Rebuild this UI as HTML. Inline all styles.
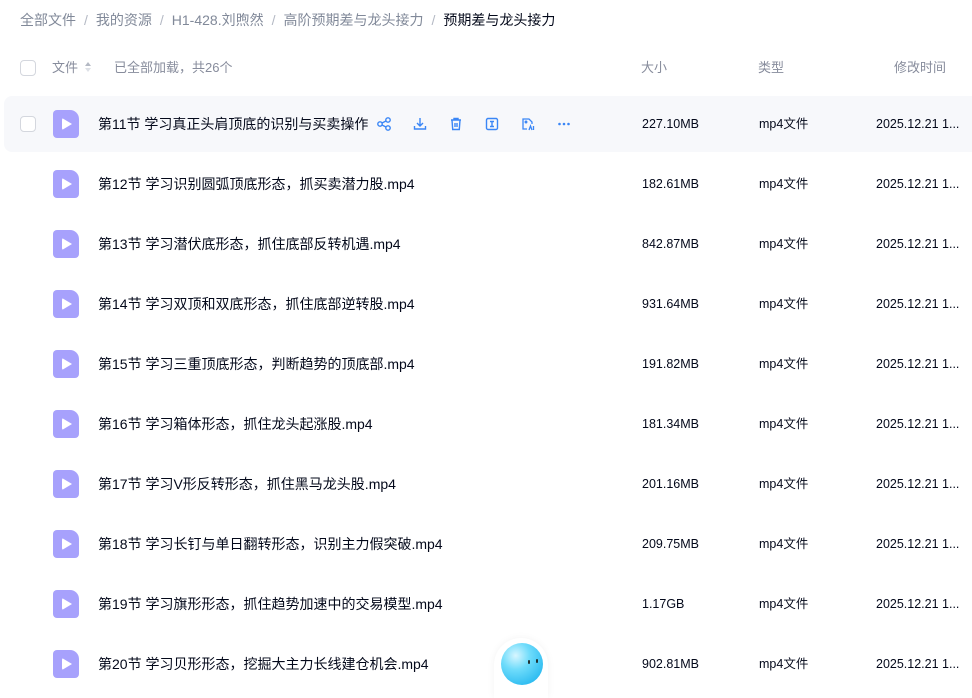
<!DOCTYPE html>
<html><head><meta charset="utf-8"><style>
*{margin:0;padding:0;box-sizing:border-box}
body{width:972px;height:688px;overflow:hidden;background:#fff;font-family:"Liberation Sans","Noto Sans CJK SC",sans-serif;position:relative;color:#03081a}
.a{position:absolute;white-space:nowrap}
.bc{top:10px;left:20px;font-size:14px;color:#818999;line-height:20px}
.bc span.s{margin:0 8px;color:#b4b9c4}
.bc b{font-weight:normal;color:#03081a}
.hd{font-size:13px;color:#878c9c;top:60px;line-height:16px}
.cb{width:16px;height:16px;border:1px solid #d4d7de;border-radius:4px;background:#fff}
.row{position:absolute;left:0;width:972px;height:56px}
.row.h{left:4px;width:968px;background:#f7f8fb;border-radius:8px 0 0 8px}
.ic{position:absolute;left:53px;top:14px;width:26px;height:28px;background:#a7a1fc;border-radius:4px 9px 4px 4px}
.ic:after{content:"";position:absolute;left:9px;top:8px;border-left:10px solid #fff;border-top:6px solid transparent;border-bottom:6px solid transparent;border-radius:2px}
.nm{position:absolute;left:98px;top:19px;font-size:14px;line-height:18px;color:#03081a}
.sz{position:absolute;left:642px;top:21px;font-size:12.5px;line-height:15px}
.tp{position:absolute;left:759px;top:21px;font-size:12.5px;line-height:15px}
.dt{position:absolute;left:876px;top:21px;font-size:12.5px;line-height:15px}
.ops svg{position:absolute;top:20px}
</style></head><body>
<div class="a bc">全部文件<span class="s">/</span>我的资源<span class="s">/</span>H1-428.刘煦然<span class="s">/</span>高阶预期差与龙头接力<span class="s">/</span><b>预期差与龙头接力</b></div>
<div class="a cb" style="left:20px;top:60px"></div>
<div class="a hd" style="left:52px">文件</div>
<div class="a" style="left:85px;top:62px;width:6px;height:12px"><div style="border-left:3px solid transparent;border-right:3px solid transparent;border-bottom:4px solid #b4b9c4"></div><div style="margin-top:2px;border-left:3px solid transparent;border-right:3px solid transparent;border-top:4px solid #dde0e6"></div></div>
<div class="a hd" style="left:114px">已全部加载，共26个</div>
<div class="a hd" style="left:641px">大小</div>
<div class="a hd" style="left:758px">类型</div>
<div class="a hd" style="left:894px">修改时间</div>

<div class="row h" style="top:96px">
<div class="a cb" style="left:16px;top:20px"></div>
<div class="ic" style="left:49px"></div>
<div class="nm" style="left:94px">第11节 学习真正头肩顶底的识别与买卖操作</div>
<div class="ops">
<svg style="left:372px" width="16" height="16" viewBox="0 0 16 16" fill="none" stroke="#3a86f6" stroke-width="1.4"><circle cx="4" cy="8" r="2.2"/><circle cx="12" cy="4" r="2.2"/><circle cx="12" cy="12" r="2.2"/><path d="M6 7l4-2M6 9l4 2"/></svg>
<svg style="left:408px" width="16" height="16" viewBox="0 0 16 16" fill="none" stroke="#3a86f6" stroke-width="1.4"><path d="M8 2v8M5 7l3 3 3-3M2.5 10v3h11v-3"/></svg>
<svg style="left:444px" width="16" height="16" viewBox="0 0 16 16" fill="none" stroke="#3a86f6" stroke-width="1.4"><path d="M3 4h10M6 4V2.5h4V4M4 4l.7 9.5h6.6L12 4M7 7v4M9 7v4"/></svg>
<svg style="left:480px" width="16" height="16" viewBox="0 0 16 16" fill="none" stroke="#3a86f6" stroke-width="1.4"><rect x="2.5" y="2.5" width="11" height="11" rx="1.5"/><path d="M6 5.5h4M8 5.5v5M6 10.5h4"/></svg>
<svg style="left:516px" width="16" height="16" viewBox="0 0 16 16" fill="none" stroke="#3a86f6" stroke-width="1.3"><path d="M7 13H3V3h6l3 3v2"/><circle cx="6" cy="6" r="0.8"/><path d="M9 14l1.5-4 1.5 4M13.5 10v4"/></svg>
<svg style="left:552px" width="16" height="16" viewBox="0 0 16 16" fill="#3a86f6"><circle cx="3.5" cy="8" r="1.3"/><circle cx="8" cy="8" r="1.3"/><circle cx="12.5" cy="8" r="1.3"/></svg>
</div>
<div class="sz" style="left:638px">227.10MB</div><div class="tp" style="left:755px">mp4文件</div><div class="dt" style="left:872px">2025.12.21 1...</div>
</div>

<div class="row" style="top:156px"><div class="ic"></div><div class="nm">第12节 学习识别圆弧顶底形态，抓买卖潜力股.mp4</div><div class="sz">182.61MB</div><div class="tp">mp4文件</div><div class="dt">2025.12.21 1...</div></div>
<div class="row" style="top:216px"><div class="ic"></div><div class="nm">第13节 学习潜伏底形态，抓住底部反转机遇.mp4</div><div class="sz">842.87MB</div><div class="tp">mp4文件</div><div class="dt">2025.12.21 1...</div></div>
<div class="row" style="top:276px"><div class="ic"></div><div class="nm">第14节 学习双顶和双底形态，抓住底部逆转股.mp4</div><div class="sz">931.64MB</div><div class="tp">mp4文件</div><div class="dt">2025.12.21 1...</div></div>
<div class="row" style="top:336px"><div class="ic"></div><div class="nm">第15节 学习三重顶底形态，判断趋势的顶底部.mp4</div><div class="sz">191.82MB</div><div class="tp">mp4文件</div><div class="dt">2025.12.21 1...</div></div>
<div class="row" style="top:396px"><div class="ic"></div><div class="nm">第16节 学习箱体形态，抓住龙头起涨股.mp4</div><div class="sz">181.34MB</div><div class="tp">mp4文件</div><div class="dt">2025.12.21 1...</div></div>
<div class="row" style="top:456px"><div class="ic"></div><div class="nm">第17节 学习V形反转形态，抓住黑马龙头股.mp4</div><div class="sz">201.16MB</div><div class="tp">mp4文件</div><div class="dt">2025.12.21 1...</div></div>
<div class="row" style="top:516px"><div class="ic"></div><div class="nm">第18节 学习长钉与单日翻转形态，识别主力假突破.mp4</div><div class="sz">209.75MB</div><div class="tp">mp4文件</div><div class="dt">2025.12.21 1...</div></div>
<div class="row" style="top:576px"><div class="ic"></div><div class="nm">第19节 学习旗形形态，抓住趋势加速中的交易模型.mp4</div><div class="sz">1.17GB</div><div class="tp">mp4文件</div><div class="dt">2025.12.21 1...</div></div>
<div class="row" style="top:636px"><div class="ic"></div><div class="nm">第20节 学习贝形形态，挖掘大主力长线建仓机会.mp4</div><div class="sz">902.81MB</div><div class="tp">mp4文件</div><div class="dt">2025.12.21 1...</div></div>

<div class="a" style="left:494px;top:638px;width:54px;height:60px;border-radius:27px 27px 0 0;background:#fff;box-shadow:0 0 8px rgba(0,0,0,0.05)"></div>
<div class="a" style="left:501px;top:643px;width:42px;height:42px;border-radius:50%;background:radial-gradient(circle at 35% 30%,#d8f6ff 0%,#6fdcfb 35%,#2bbaf0 80%,#1aa8e6 100%)"></div>
<div class="a" style="left:528px;top:660px;width:2px;height:4px;background:#233;border-radius:1px"></div>
<div class="a" style="left:536px;top:659px;width:2px;height:4px;background:#233;border-radius:1px"></div>
</body></html>
